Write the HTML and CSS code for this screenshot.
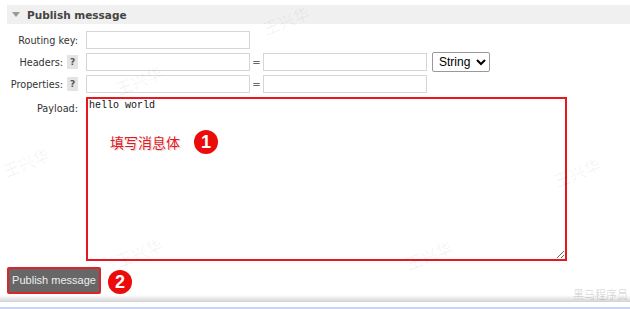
FILE: index.html
```html
<!DOCTYPE html>
<html>
<head>
<meta charset="utf-8">
<link rel="stylesheet" href="styles.css">
</head>
<body>
<div class="page">
  <div class="section-head">
    <span class="tri"></span>
    <span class="title">Publish message</span>
  </div>
  <div class="form">
    <div class="row">
      <div class="label">Routing key:</div>
      <input class="field" type="text">
    </div>
    <div class="row">
      <div class="label">Headers: <span class="help">?</span></div>
      <input class="field" type="text">
      <span class="eq">=</span>
      <input class="field" type="text">
      <select class="sel"><option>String</option></select>
    </div>
    <div class="row">
      <div class="label">Properties: <span class="help">?</span></div>
      <input class="field" type="text">
      <span class="eq">=</span>
      <input class="field" type="text">
    </div>
    <div class="row payload-row">
      <div class="label plabel">Payload:</div>
      <div class="payload-wrap">
        <textarea class="payload">hello world</textarea>
        <div class="note">
          <span class="note-text">填写消息体</span>
          <span class="badge">1</span>
        </div>
      </div>
    </div>
  </div>
  <div class="actions">
    <button class="btn">Publish message</button>
    <span class="badge">2</span>
  </div>
  <div class="shadow"></div>
  <div class="blue"></div>

  <span class="wm wm1">王兴华</span>
  <span class="wm wm2">王兴华</span>
  <span class="wm wm3">王兴华</span>
  <span class="wm wm4">王兴华</span>
  <span class="wm wm5">王兴华</span>
  <span class="wm wm6">王兴华</span>
  <span class="brand">黑马程序员</span>
</div>
</body>
</html>
```
FILE: styles.css
```css
html, body {
  margin: 0;
  padding: 0;
  background: #fff;
}
.page {
  position: relative;
  width: 630px;
  height: 309px;
  overflow: hidden;
  font-family: "DejaVu Sans", Verdana, sans-serif;
  font-size: 10px;
  color: #333;
  padding-top: 5px;
  box-sizing: border-box;
}
.section-head {
  margin-left: 7px;
  height: 19px;
  background: #f0f0f0;
  display: flex;
  align-items: center;
  padding-left: 5px;
}
.tri {
  width: 0;
  height: 0;
  border-left: 4px solid transparent;
  border-right: 4px solid transparent;
  border-top: 5px solid #999;
  margin-right: 7px;
}
.title {
  font-weight: bold;
  font-size: 10.5px;
  color: #444;
}
.form {
  margin-top: 7px;
  display: flex;
  flex-direction: column;
  gap: 4px;
}
.row {
  display: flex;
  align-items: center;
  height: 18px;
}
.label {
  width: 78px;
  text-align: right;
  margin-right: 8px;
  white-space: nowrap;
  display: flex;
  justify-content: flex-end;
  align-items: center;
  gap: 4px;
  font-size: 9.7px;
}
.help {
  display: inline-block;
  width: 11px;
  height: 14px;
  background: #e4e4e4;
  text-align: center;
  line-height: 14px;
  font-weight: bold;
  font-size: 9px;
  color: #555;
}
.field {
  width: 164px;
  height: 18px;
  box-sizing: border-box;
  border: 1px solid #d6d6d6;
  margin: 0;
  padding: 0 2px;
}
.eq {
  width: 13px;
  text-align: center;
  color: #666;
}
.sel {
  margin-left: 5px;
  width: 58px;
  height: 20px;
  font-family: "Liberation Sans", Arial, sans-serif;
  font-size: 12px;
  border: 1px solid #999;
  border-radius: 2px;
  background: #fff;
  color: #000;
  padding: 0 2px;
}
.payload-row {
  height: auto;
  align-items: flex-start;
}
.plabel {
  padding-top: 6px;
}
.payload-wrap {
  position: relative;
}
.payload {
  display: block;
  width: 481px;
  height: 164px;
  box-sizing: border-box;
  border: 2px solid #e8161d;
  margin: 0;
  padding: 1px 0 0 1px;
  font-family: "Liberation Mono", "Courier New", monospace;
  font-size: 10px;
  color: #111;
  resize: both;
  outline: none;
}
.note {
  position: absolute;
  left: 24px;
  top: 33px;
  display: flex;
  align-items: center;
  gap: 14px;
}
.note-text {
  font-family: "Noto Sans CJK SC", sans-serif;
  font-size: 14px;
  color: #e8161d;
  text-shadow: 0 0 2px #fff, 1px 1px 1px #ccc;
}
.badge {
  display: inline-flex;
  justify-content: center;
  align-items: center;
  width: 24px;
  height: 24px;
  border-radius: 50%;
  background: #ec0b0b;
  color: #fff;
  font-family: "Liberation Sans", Arial, sans-serif;
  font-weight: bold;
  font-size: 18px;
}
.actions {
  margin-top: 5px;
  margin-left: 7px;
  display: flex;
  align-items: center;
  gap: 7px;
}
.actions .badge {
  margin-top: 4px;
}
.btn {
  width: 94px;
  height: 27px;
  box-sizing: border-box;
  background: #676767;
  color: #eee;
  border: 2px solid #d8262c;
  border-radius: 2px;
  font-family: "Liberation Sans", Arial, sans-serif;
  font-size: 11px;
  padding: 0;
  appearance: none;
}
.shadow {
  margin-top: 1px;
  height: 7px;
  background: linear-gradient(#ffffff, #d2d2d2);
}
.blue {
  margin-top: 5px;
  height: 5px;
  background: #c8d6f4;
}
.wm {
  position: absolute;
  font-family: "Noto Sans CJK SC", sans-serif;
  font-size: 16px;
  color: rgba(0, 0, 0, 0.06);
  transform: rotate(-22deg);
  white-space: nowrap;
  pointer-events: none;
}
.wm1 { left: 262px; top: 8px; }
.wm2 { left: 115px; top: 68px; }
.wm3 { left: 2px; top: 150px; }
.wm4 { left: 553px; top: 160px; }
.wm5 { left: 115px; top: 240px; }
.wm6 { left: 405px; top: 243px; }
.brand {
  position: absolute;
  right: 2px;
  top: 286px;
  font-family: "Noto Sans CJK SC", sans-serif;
  font-size: 11px;
  color: rgba(0, 0, 0, 0.16);
}
```
